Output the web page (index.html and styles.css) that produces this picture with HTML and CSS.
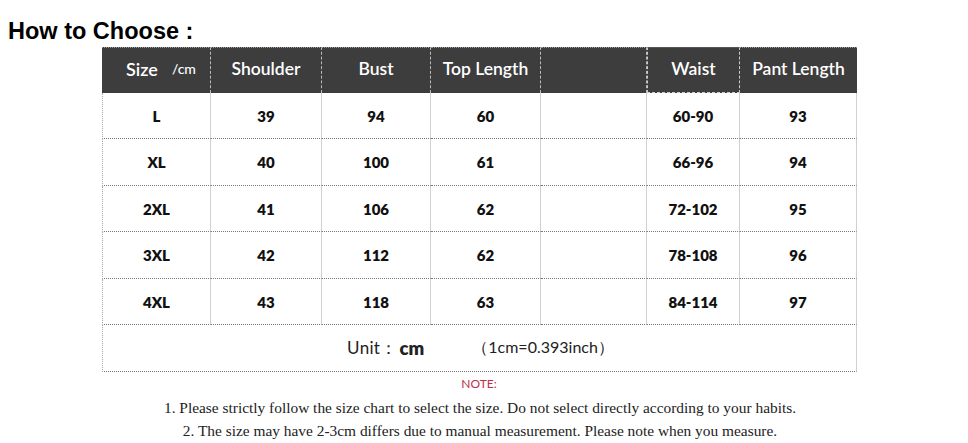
FILE: index.html
```html
<!DOCTYPE html>
<html>
<head>
<meta charset="utf-8">
<link rel="stylesheet" href="styles.css">
</head>
<body>
<h1 class="title">How to Choose :</h1>
<div class="chart">
  <div class="hd first">Size <span class="unit-small">/cm</span></div>
  <div class="hd">Shoulder</div>
  <div class="hd">Bust</div>
  <div class="hd">Top Length</div>
  <div class="hd"></div>
  <div class="hd waist">Waist</div>
  <div class="hd last">Pant Length</div>

  <div class="c first">L</div><div class="c">39</div><div class="c">94</div><div class="c">60</div><div class="c"></div><div class="c">60-90</div><div class="c last">93</div>
  <div class="c first">XL</div><div class="c">40</div><div class="c">100</div><div class="c">61</div><div class="c"></div><div class="c">66-96</div><div class="c last">94</div>
  <div class="c first">2XL</div><div class="c">41</div><div class="c">106</div><div class="c">62</div><div class="c"></div><div class="c">72-102</div><div class="c last">95</div>
  <div class="c first">3XL</div><div class="c">42</div><div class="c">112</div><div class="c">62</div><div class="c"></div><div class="c">78-108</div><div class="c last">96</div>
  <div class="c first">4XL</div><div class="c">43</div><div class="c">118</div><div class="c">63</div><div class="c"></div><div class="c">84-114</div><div class="c last">97</div>

  <div class="unitrow"><span class="u1">Unit：</span><span class="u2">cm</span><span class="u3">（1cm=0.393inch）</span></div>
</div>
<div class="note">NOTE:</div>
<p class="line l1">1. Please strictly follow the size chart to select the size. Do not select directly according to your habits.</p>
<p class="line l2">2. The size may have 2-3cm differs due to manual measurement. Please note when you measure.</p>
</body>
</html>
```
FILE: styles.css
```css
html, body { margin: 0; padding: 0; background: #fff; }
body { width: 968px; height: 443px; overflow: hidden; }
.title {
  font-family: "Liberation Sans", Arial, sans-serif;
  font-weight: bold;
  font-size: 23.5px;
  line-height: 26px;
  margin: 0;
  padding: 18px 0 0 8px;
  height: 29px;
  color: #000;
}
.chart {
  margin-left: 102px;
  width: 755px;
  display: grid;
  grid-template-columns: 109px 111px 109px 110px 106px 93px 117px;
  grid-template-rows: 46px 46px 47px 46px 47px 46px 47px;
  font-family: Lato, "Open Sans", sans-serif;
}
.hd {
  background: #3d3d3d;
  color: #fff;
  font-size: 17.5px;
  font-weight: 600;
  display: flex;
  align-items: center;
  justify-content: center;
  border-right: 1px dashed #bbb;
  border-top: 1px dotted #999;
  box-sizing: border-box;
  padding-bottom: 4px;
}
.hd.first { padding-left: 10px; font-size: 18px; }
.hd.last { border-right: none; }
.hd.waist { border: 1px dashed #ccc; border-top: 1px solid #555; }
.unit-small { font-size: 14px; margin-left: 14px; font-weight: 500; }
.c {
  display: flex;
  align-items: center;
  justify-content: center;
  font-size: 15px;
  font-weight: 800;
  color: #111;
  border-right: 1px solid #d0d0d0;
  border-bottom: 1px dotted #777;
  box-sizing: border-box;
}
.c.first { border-left: 1px dotted #aaa; }
.c.last { border-right: 1px solid #d0d0d0; }
.unitrow {
  grid-column: 1 / -1;
  display: flex;
  align-items: center;
  justify-content: center;
  border-left: 1px dotted #aaa;
  border-right: 1px solid #d0d0d0;
  border-bottom: 1px dotted #777;
  box-sizing: border-box;
  color: #222;
  padding-left: 2px;
}
.u1 { font-size: 17px; letter-spacing: 0.3px; }
.u2 { font-size: 18.5px; font-weight: 800; margin-left: 2px; margin-right: 48px; }
.u3 { font-size: 16px; }
.note {
  text-align: center;
  font-family: Lato, "Open Sans", sans-serif;
  font-size: 12px;
  color: #c0304a;
  margin: 4px 0 0 0;
  padding-right: 10px;
  line-height: 15px;
}
.line {
  margin: 0;
  font-family: "Liberation Serif", serif;
  font-size: 15.4px;
  color: #222;
  text-align: center;
  padding-right: 8px;
  line-height: 23px;
}
.l1 { margin-top: 5px; }
```
